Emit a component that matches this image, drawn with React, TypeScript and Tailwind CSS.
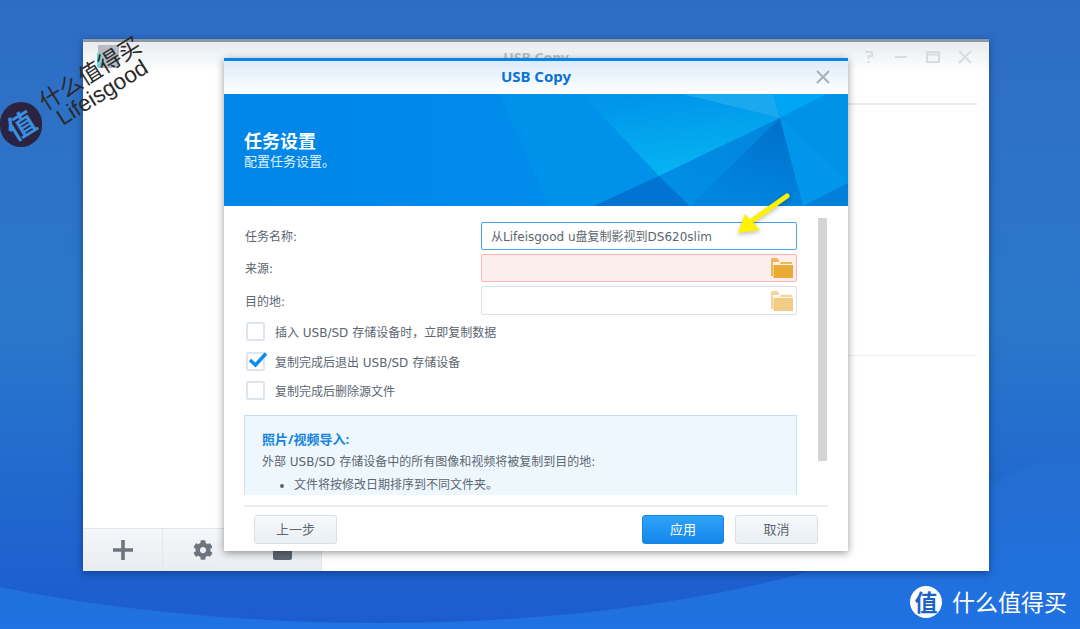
import { FaCog } from "react-icons/fa";

const font = "font-['DejaVu_Sans','Noto_Sans_CJK_SC',sans-serif]";
const titleFont = "font-['Noto_Sans','Noto_Sans_CJK_SC',sans-serif]";

const Folder = ({ faded }: { faded?: boolean }) => (
  <svg width="24" height="22" viewBox="0 0 24 22" className={faded ? "opacity-60" : ""}>
    <path d="M1 2.5 Q1 1 2.5 1 H7 L9 3 V5 H3 V19 H1 Z" fill="#edb95a" />
    <path d="M3 6 H9 L11 4 H22 Q23 4 23 5 V21 H3 Z" fill="#fff4dc" />
    <path d="M3.5 8 H23 V21 H3.5 Z" fill="#e9ab35" />
    <path d="M11 5 H22 V7 H9.5 Z" fill="#edb95a" />
  </svg>
);

const Checkbox = ({ checked }: { checked?: boolean }) => (
  <div className="relative w-[19px] h-[19px] rounded-[2px] border-2 border-[#dfe5ec] bg-white shrink-0">
    {checked && (
      <svg width="22" height="18" viewBox="0 0 22 18" className="absolute left-[-1px] top-[-3px]">
        <path d="M3 9 L8.5 14 L19 2.5" fill="none" stroke="#0a8cf0" strokeWidth="3.4" />
      </svg>
    )}
  </div>
);

const Banner = () => (
  <svg viewBox="0 0 624 112" width="624" height="112" className="absolute inset-0" preserveAspectRatio="none">
    <defs>
      <linearGradient id="base" x1="0" x2="1" y1="0" y2="0">
        <stop offset="0" stopColor="#0086e8" />
        <stop offset="1" stopColor="#0091ec" />
      </linearGradient>
      <linearGradient id="glow" x1="0.35" y1="0" x2="0.6" y2="1">
        <stop offset="0" stopColor="#0094ea" />
        <stop offset="1" stopColor="#06b6f2" />
      </linearGradient>
      <linearGradient id="deep" x1="0.5" y1="1" x2="0.85" y2="0">
        <stop offset="0" stopColor="#0086e0" />
        <stop offset="1" stopColor="#006fc9" />
      </linearGradient>
      <linearGradient id="mid" x1="0" y1="1" x2="1" y2="0">
        <stop offset="0" stopColor="#0090e4" />
        <stop offset="1" stopColor="#0084dc" />
      </linearGradient>
    </defs>
    <rect width="624" height="112" fill="url(#base)" />
    <polygon points="275,0 358,0 435,82 370,112 325,112" fill="#0092ea" />
    <polygon points="358,0 458,0 556,24 435,82" fill="url(#glow)" />
    <polygon points="458,0 549,0 556,24" fill="#1aa8ee" />
    <polygon points="549,0 603,0 556,24" fill="#00a5f5" />
    <polygon points="603,0 624,0 624,86 556,24" fill="#0092e6" />
    <polygon points="435,82 370,112 466,112" fill="#0074d0" />
    <polygon points="556,24 435,82 466,112" fill="url(#mid)" />
    <polygon points="556,24 466,112 579,112" fill="url(#deep)" />
    <polygon points="556,24 579,112 624,89 624,86" fill="#0096ec" />
    <polygon points="579,112 624,89 624,112" fill="#0080d8" />
  </svg>
);

export default function App() {
  return (
    <div className={`relative w-[1080px] h-[629px] overflow-hidden bg-gradient-to-b from-[#2e6dc4] via-[#2b78cb] to-[#1c5bd0] ${font}`}>
      <svg viewBox="0 0 1080 629" width="1080" height="629" className="absolute inset-0">
        <defs>
          <linearGradient id="wave" x1="0" y1="0" x2="0" y2="1">
            <stop offset="0" stopColor="#256cce" />
            <stop offset="1" stopColor="#1f72e2" />
          </linearGradient>
        </defs>
        <path d="M0 587 C120 612 260 623 380 623 C560 623 720 600 830 565 L1080 440 V629 H0 Z" fill="url(#wave)" />
      </svg>

      <div className="relative flex pt-[39px] pl-[83px]">
        {/* main window */}
        <div className="relative w-[906px] h-[532px] flex flex-col bg-white border-t-[3px] border-[#8c98a6] shadow-[0_2px_8px_rgba(0,30,80,0.5)]">
          <div className="relative h-[30px] shrink-0 flex items-center justify-center bg-gradient-to-b from-[#e8ebee] to-white">
            <div className="absolute left-[15px] top-[3px] w-[21px] h-[23px] bg-[#b6bcc3]">
              <div className="absolute left-[-1px] top-[8px] w-[4px] h-[14px] bg-[#5fd6e0]" />
            </div>
            <span className={`text-[14px] font-bold text-[#b9bec3] ${titleFont}`}>USB Copy</span>
            <div className="absolute right-[16px] top-0 h-full flex items-center gap-[15px]">
              <svg width="18" height="14" viewBox="0 0 18 14" fill="none" stroke="#d9dcdf" strokeWidth="2" className="mr-[1px]">
                <path d="M5 2 H12 V6 H8.5 V9 M8.5 11 V13" />
              </svg>
              <svg width="14" height="14" viewBox="0 0 14 14" fill="none" stroke="#d9dcdf" strokeWidth="2" className="mr-[1px]">
                <path d="M1 7 H13" />
              </svg>
              <svg width="18" height="14" viewBox="0 0 18 14" fill="none" stroke="#d9dcdf" strokeWidth="2">
                <path d="M3 2 H15 V12 H3 Z M3 4.5 H15" />
              </svg>
              <svg width="16" height="14" viewBox="0 0 16 14" fill="none" stroke="#d9dcdf" strokeWidth="2">
                <path d="M2 1 L14 13 M14 1 L2 13" />
              </svg>
            </div>
          </div>

          <div className="flex-1 flex min-h-0">
            <div className="w-[239px] flex flex-col justify-end">
              <div className="h-[43px] flex bg-gradient-to-b from-[#f5f7f9] to-[#e9edf1] border-t border-[#dfe6ec] border-r">
                <div className="w-[80px] flex items-center justify-center border-r border-[#e2e7ec]">
                  <svg width="20" height="20" viewBox="0 0 20 20" fill="#6d7680">
                    <path d="M8.2 0 H11.8 V8.2 H20 V11.8 H11.8 V20 H8.2 V11.8 H0 V8.2 H8.2 Z" />
                  </svg>
                </div>
                <div className="w-[80px] flex items-center justify-center">
                  <FaCog size={20} color="#6d7680" />
                </div>
                <div className="flex-1 flex items-center justify-center">
                  <div className="w-[19px] h-[19px] rounded-[2px] bg-[#5f6873] flex items-center justify-center">
                    <div className="w-[11px] h-[2px] bg-[#e8ecef]" />
                  </div>
                </div>
              </div>
            </div>
            <div className="flex-1 pt-[31px] pr-[12px]">
              <div className="h-[2px] bg-[#e8e9ea]" />
              <div className="h-px bg-[#f0f1f2] mt-[250px]" />
            </div>
          </div>

          {/* USB Copy dialog */}
          <div className="absolute left-[141px] top-[16px] w-[624px] h-[493px] flex flex-col bg-white border-t-[3px] border-[#0086e5] shadow-[0_2px_8px_rgba(0,0,0,0.4)]">
            <div className="relative h-[33px] shrink-0 flex items-center justify-center pb-[2px] bg-gradient-to-b from-[#dcecfa] to-white">
              <span className={`text-[15px] font-bold text-[#0a72d4] ${titleFont}`}>USB Copy</span>
              <svg width="14" height="14" viewBox="0 0 14 14" fill="none" stroke="#a9b1b8" strokeWidth="2" className="absolute right-[18px] top-[9px]">
                <path d="M1 1 L13 13 M13 1 L1 13" />
              </svg>
            </div>
            <div className="relative h-[112px] shrink-0 border-b border-[#5cb5f0]">
              <Banner />
              <div className={`relative pl-[20px] pt-[35px] text-white ${titleFont}`}>
                <div className="text-[18px] leading-[24px] font-bold">任务设置</div>
                <div className="text-[13px] leading-[16px] text-[#e2f2fd]">配置任务设置。</div>
              </div>
            </div>

            <div className="relative h-[289px] shrink-0 overflow-hidden pl-[20px] pt-[16px]">
              <div className="absolute left-[594px] top-[12px] w-[9px] h-[243px] bg-[#d2d4d6]" />
              <div className="w-[553px] text-[12px] text-[#5b6670]">
                <div className="flex flex-col gap-[4px]">
                  <div className="flex items-center justify-between">
                    <span className="pl-px pt-[2px]">任务名称:</span>
                    <div className="w-[316px] h-[28px] rounded-[2px] border border-[#48a5ea] bg-white px-[9px] pt-[2px] flex items-center">
                      从Lifeisgood u盘复制影视到DS620slim
                    </div>
                  </div>
                  <div className="flex items-center justify-between">
                    <span className="pl-px pt-[2px]">来源:</span>
                    <div className="w-[316px] h-[28px] rounded-[2px] border border-[#ffb3b3] bg-[#fdeeee] pr-[2px] flex items-center justify-end">
                      <Folder />
                    </div>
                  </div>
                  <div className="flex items-center justify-between">
                    <span className="pl-px pt-[2px]">目的地:</span>
                    <div className="w-[316px] h-[29px] rounded-[2px] border border-[#dbe1ea] bg-white pr-[2px] flex items-center justify-end">
                      <Folder faded />
                    </div>
                  </div>
                </div>

                <div className="flex flex-col pt-[7px] pl-[2px]">
                  <div className="flex items-center gap-[10px]">
                    <Checkbox />
                    <span className="pt-[2px] leading-[16px]">插入 USB/SD 存储设备时，立即复制数据</span>
                  </div>
                  <div className="flex items-center gap-[10px] mt-[11px]">
                    <Checkbox checked />
                    <span className="pt-[2px] leading-[16px]">复制完成后退出 USB/SD 存储设备</span>
                  </div>
                  <div className="flex items-center gap-[10px] mt-[10px]">
                    <Checkbox />
                    <span className="pt-[2px] leading-[16px]">复制完成后删除源文件</span>
                  </div>
                </div>

                <div className="mt-[15px] border border-[#c5e0f5] bg-[#eff7fe] pl-[17px] pt-[14px] h-[140px]">
                  <div className={`text-[13px] leading-[18px] font-bold text-[#1584e0] ${titleFont}`}>照片/视频导入:</div>
                  <div className="mt-[5px] leading-[18px]">外部 USB/SD 存储设备中的所有图像和视频将被复制到目的地:</div>
                  <ul className="list-disc pl-[32px] mt-[5px] leading-[18px]">
                    <li>文件将按修改日期排序到不同文件夹。</li>
                    <li>如果文件已存在，将重命名新文件。</li>
                  </ul>
                </div>
              </div>
            </div>

            <div className="mt-[10px] ml-[20px] w-[584px] h-[2px] bg-[#ececec]" />
            <div className={`flex items-center pt-[8px] pl-[30px] pr-[30px] gap-[11px] text-[13px] ${titleFont}`}>
              <button className="w-[83px] h-[29px] mr-auto rounded-[3px] border border-[#d5dfe8] bg-gradient-to-b from-[#f7f9fb] to-[#ebeff3] text-[#5b6670]">上一步</button>
              <button className="w-[82px] h-[29px] rounded-[3px] border border-[#1a84dc] bg-gradient-to-b from-[#2fa3fb] to-[#1287ea] text-white">应用</button>
              <button className="w-[83px] h-[29px] rounded-[3px] border border-[#d5dfe8] bg-gradient-to-b from-[#f7f9fb] to-[#ebeff3] text-[#5b6670]">取消</button>
            </div>
          </div>
        </div>
      </div>

      {/* annotation arrow */}
      <svg width="70" height="56" viewBox="0 0 70 56" className="absolute left-[726px] top-[190px] drop-shadow-[0_2px_2px_rgba(0,0,0,0.25)]">
        <path d="M61 6 L27 30" stroke="#fff200" strokeWidth="5" strokeLinecap="round" />
        <path d="M12 43 L19 24 L34 40 Z" fill="#fff200" />
      </svg>

      {/* watermark */}
      <div className="absolute left-0 top-[102px] w-[42px] h-[45px] rounded-full bg-[#2b2342] flex items-center justify-center overflow-hidden">
        <span className={`text-[28px] font-bold text-[#3a8fe0] rotate-[-32deg] leading-none ${titleFont}`}>值</span>
      </div>
      <div className={`absolute left-[41px] top-[90px] origin-left rotate-[-32deg] text-[23px] leading-[26px] text-[#2a2a2a] whitespace-nowrap ${titleFont}`}>什么值得买</div>
      <div className="absolute left-[59px] top-[106px] origin-left rotate-[-32deg] text-[22.5px] leading-[28px] text-[#2a2a2a] whitespace-nowrap font-['Liberation_Sans',sans-serif]">Lifeisgood</div>

      <div className={`absolute left-[910px] top-[586px] flex items-center gap-[10px] ${titleFont}`}>
        <div className="w-[32px] h-[32px] rounded-full bg-white flex items-center justify-center">
          <span className="text-[23px] font-bold text-[#1c63c4] leading-none">值</span>
        </div>
        <span className="text-[23px] leading-[32px] text-white">什么值得买</span>
      </div>
    </div>
  );
}
